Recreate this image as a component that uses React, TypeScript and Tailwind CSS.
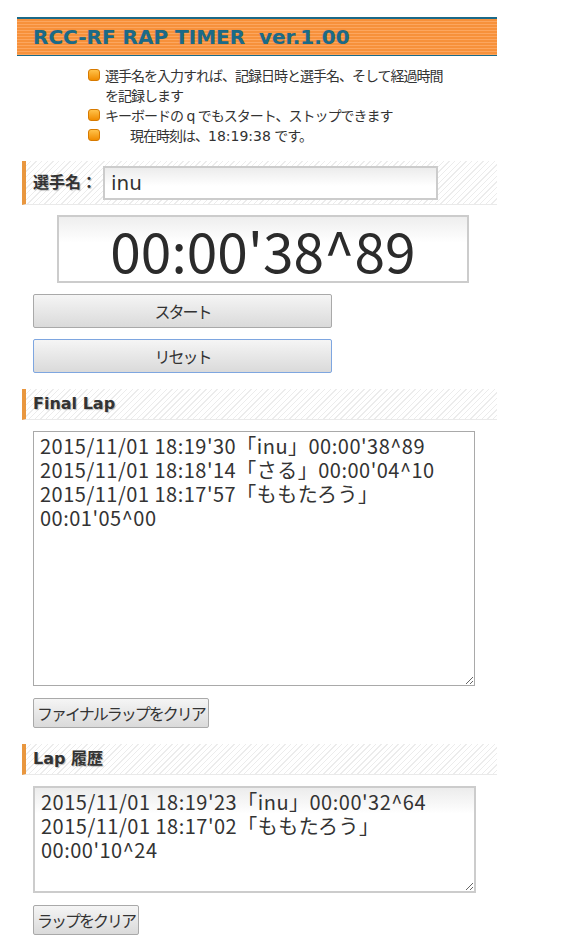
import React from 'react';

// ─────────────────────────────────────────
// Shared styles
// ─────────────────────────────────────────

const font = "font-['DejaVu_Sans','Noto_Sans_CJK_JP',sans-serif]";
const jp = "font-['Noto_Sans_CJK_JP',sans-serif]";

const hatch =
  'bg-[repeating-linear-gradient(135deg,#ffffff_0px,#ffffff_3px,#ececec_3px,#ececec_4px)]';

const btnBase = [
  'block px-[3px] text-[16px] text-[#333] leading-none tracking-[-2px]',
  jp,
  'border rounded-[2px]',
  'bg-[linear-gradient(#f5f5f5,#dadada)]',
].join(' ');

const headLabel =
  "text-[16px] font-bold text-[#333] font-['DejaVu_Sans','Noto_Sans_CJK_JP',sans-serif] [text-shadow:1px_1px_1px_rgba(0,0,0,0.25)]";

const bullets = [
  '選手名を入力すれば、記録日時と選手名、そして経過時間を記録します',
  'キーボードの q でもスタート、ストップできます',
];

const finalLap = [
  "2015/11/01 18:19'30「inu」00:00'38^89",
  "2015/11/01 18:18'14「さる」00:00'04^10",
  "2015/11/01 18:17'57「ももたろう」",
  "00:01'05^00",
].join('\n');

const lapHistory = [
  "2015/11/01 18:19'23「inu」00:00'32^64",
  "2015/11/01 18:17'02「ももたろう」",
  "00:00'10^24",
].join('\n');

function Bullet() {
  return (
    <span className="mt-[3px] mr-[5px] h-[12px] w-[12px] shrink-0 rounded-[3px] border border-[#d77a00] bg-[linear-gradient(#ffc24a,#f08c00)]" />
  );
}

function SectionHead({ children, className = '' }: { children: React.ReactNode; className?: string }) {
  return (
    <div
      className={`ml-[22px] w-[475px] flex items-center border-l-4 border-[#e9973f] border-b border-b-[#eaeaea] pl-[7px] ${hatch} ${className}`}
    >
      {children}
    </div>
  );
}

export default function App() {
  return (
    <div className={`w-[569px] min-h-[936px] bg-white pt-[17px] text-[#333] ${font}`}>
      {/* title bar */}
      <div className="ml-[17px] w-[480px] h-[39px] flex items-center pl-[16px] border-t-2 border-b border-[#1b6a88] bg-[repeating-linear-gradient(180deg,#f7913b_0px,#f7913b_2px,#fca65f_2px,#fca65f_3px)]">
        <h1 className="font-['DejaVu_Sans',sans-serif] text-[20px] font-bold text-[#1b6a88] whitespace-pre [text-shadow:0_0_1px_rgba(0,0,0,0.2)]">
          RCC-RF RAP TIMER  ver.1.00
        </h1>
      </div>

      {/* notes */}
      <ul className="mt-[10px] ml-[88px] w-[362px] text-[14px] tracking-[-1px] leading-[20px] text-[#333]">
        {bullets.map((b) => (
          <li key={b} className="flex items-start">
            <Bullet />
            <span>{b}</span>
          </li>
        ))}
        <li className="flex items-start">
          <Bullet />
          <span className="pl-[25px]">
            現在時刻は、<span className="tracking-normal">18:19:38</span> です。
          </span>
        </li>
      </ul>

      {/* name */}
      <SectionHead className="mt-[15px] h-[44px]">
        <span className={headLabel}>選手名：</span>
        <input
          readOnly
          value="inu"
          className="ml-[6px] h-[34px] w-[335px] border-2 border-[#cccccc] bg-[linear-gradient(#ececec,#ffffff_60%)] px-[6px] text-[20px] text-[#333] outline-none"
        />
      </SectionHead>

      {/* timer */}
      <div className="mt-[10px] ml-[57px] w-[412px] h-[68px] flex items-center justify-center border-2 border-[#cccccc] bg-[linear-gradient(#eeeeee,#ffffff_40%)]">
        <span className={`${jp} text-[55px] leading-none text-[#2b2b2b]`}>00:00'38^89</span>
      </div>

      {/* controls */}
      <button className={`${btnBase} border-[#a9a9a9] mt-[11px] ml-[33px] w-[299px] h-[34px]`}>スタート</button>
      <button className={`${btnBase} border-[#7ea6e0] mt-[11px] ml-[33px] w-[299px] h-[34px]`}>リセット</button>

      {/* final lap */}
      <SectionHead className="mt-[16px] h-[31px]">
        <span className={headLabel}>Final Lap</span>
      </SectionHead>
      <textarea
        readOnly
        defaultValue={finalLap}
        className={`${jp} block mt-[11px] ml-[33px] w-[442px] h-[255px] border border-[#a9a9a9] px-[6px] py-[2px] text-[20px] tracking-[0.5px] leading-[24px] text-[#333] outline-none`}
      />
      <button className={`${btnBase} border-[#a9a9a9] mt-[12px] ml-[33px] h-[30px]`}>ファイナルラップをクリア</button>

      {/* lap history */}
      <SectionHead className="mt-[16px] h-[31px]">
        <span className={headLabel}>Lap 履歴</span>
      </SectionHead>
      <textarea
        readOnly
        defaultValue={lapHistory}
        className={`${jp} block mt-[11px] ml-[33px] w-[443px] h-[107px] border-2 border-[#cccccc] bg-[linear-gradient(#ececec,#ffffff_25%)] px-[6px] py-[2px] text-[20px] tracking-[0.5px] leading-[24px] text-[#333] outline-none`}
      />
      <button className={`${btnBase} border-[#a9a9a9] mt-[12px] ml-[33px] h-[30px]`}>ラップをクリア</button>
    </div>
  );
}
